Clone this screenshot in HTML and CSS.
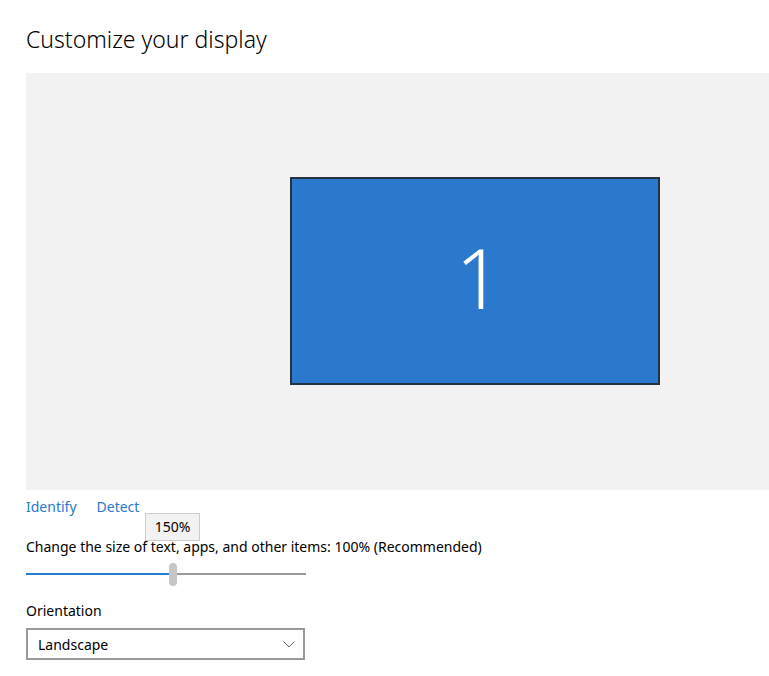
FILE: index.html
```html
<!DOCTYPE html>
<html>
<head>
<meta charset="utf-8">
<link rel="stylesheet" href="styles.css">
</head>
<body>
<div class="page">
  <h1 class="title">Customize your display</h1>
  <div class="preview">
    <div class="monitor"><span class="monitor-num">1</span></div>
  </div>
  <div class="links">
    <a class="link">Identify</a>
    <a class="link">Detect</a>
  </div>
  <div class="scale">
    <div class="tooltip">150%</div>
    <div class="label">Change the size of text, apps, and other items: 100% (Recommended)</div>
    <div class="slider">
      <div class="track-fill"></div>
      <div class="thumb"></div>
      <div class="track-rest"></div>
    </div>
  </div>
  <div class="label orient-label">Orientation</div>
  <div class="select">
    <span>Landscape</span>
    <svg class="chevron" width="12" height="7" viewBox="0 0 12 7"><path d="M0.5 0.5 L6 6 L11.5 0.5" fill="none" stroke="#666" stroke-width="1"/></svg>
  </div>
</div>
</body>
</html>
```
FILE: styles.css
```css
html, body {
  margin: 0;
  padding: 0;
  background: #fff;
}
.page {
  font-family: "Noto Sans", "Open Sans", sans-serif;
  color: #000;
  padding-left: 26px;
}
.title {
  margin: 0;
  height: 73px;
  box-sizing: border-box;
  padding-top: 23px;
  font-size: 23px;
  font-weight: 300;
  line-height: 32px;
}
.preview {
  position: relative;
  height: 417px;
  background: #f2f2f2;
}
.monitor {
  position: absolute;
  left: 264px;
  top: 104px;
  width: 366px;
  height: 204px;
  background: #2a79cc;
  border: 2px solid #25323f;
  display: flex;
  align-items: center;
  justify-content: center;
}
.monitor-num {
  color: #fff;
  font-size: 82px;
  font-weight: 300;
  line-height: 1;
  margin-top: -8px;
  margin-left: 8px;
}
.links {
  display: flex;
  gap: 20px;
  padding-top: 8px;
  height: 22px;
  font-size: 14px;
  line-height: 18px;
}
.link {
  color: #2a7acb;
}
.scale {
  position: relative;
  width: 280px;
}
.tooltip {
  position: absolute;
  left: 119px;
  top: -7px;
  width: 55px;
  height: 28px;
  box-sizing: border-box;
  border: 1px solid #cccccc;
  background: #f2f2f2;
  font-size: 14px;
  line-height: 26px;
  text-align: center;
  z-index: 2;
}
.label {
  font-size: 14px;
  line-height: 18px;
  white-space: nowrap;
}
.scale .label {
  padding-top: 18px;
}
.slider {
  display: flex;
  align-items: center;
  height: 24px;
  margin-top: 6px;
}
.track-fill {
  width: 143px;
  height: 2px;
  background: #2a7acb;
}
.thumb {
  width: 8px;
  height: 23px;
  border-radius: 4px;
  background: #c6c6c6;
}
.track-rest {
  flex: 1;
  height: 2px;
  background: #999;
}
.orient-label {
  margin-top: 16px;
}
.select {
  margin-top: 8px;
  width: 279px;
  height: 32px;
  box-sizing: border-box;
  border: 2px solid #999;
  display: flex;
  align-items: center;
  justify-content: space-between;
  padding: 0 8px 0 10px;
  font-size: 14px;
}
.chevron {
  display: block;
}
```
